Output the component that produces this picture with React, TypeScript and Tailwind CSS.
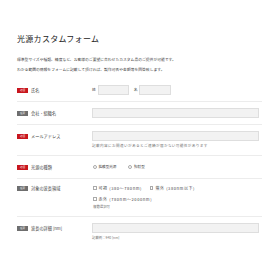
import React from "react";

const jp = "font-['Noto_Sans_CJK_JP','Noto_Sans',sans-serif]";

const Badge = ({ required }: { required?: boolean }) => (
	<span
		className={`flex h-[5px] w-[11px] items-center justify-center text-[2.6px] leading-none text-white ${
			required ? "bg-[#c8161d]" : "bg-[#6e6e6e]"
		}`}
	>
		{required ? "必須" : "任意"}
	</span>
);

const Label = ({ required, text, h = "h-[10px]" }: { required?: boolean; text: string; h?: string }) => (
	<div className={`flex w-[75px] shrink-0 items-center gap-[3px] ${h}`}>
		<Badge required={required} />
		<span className="text-[4.2px] leading-none text-[#444]">{text}</span>
	</div>
);

const Input = ({ className = "w-[167px]" }: { className?: string }) => (
	<div className={`h-[10px] border border-[#dedede] bg-[#f2f2f2] ${className}`} />
);

const Note = ({ text, className = "text-[3.4px]" }: { text: string; className?: string }) => (
	<p className={`mt-[2px] leading-[6px] text-[#777] ${className}`}>{text}</p>
);

const Radio = ({ text }: { text: string }) => (
	<label className="flex items-center gap-[2px]">
		<span className="h-[3.5px] w-[3.5px] rounded-full border-[0.5px] border-[#aaa] bg-white" />
		<span>{text}</span>
	</label>
);

const Check = ({ text }: { text: string }) => (
	<label className="flex items-center gap-[2px]">
		<span className="h-[3.5px] w-[3.5px] border-[0.5px] border-[#aaa] bg-white" />
		<span className="tracking-[0.6px]">{text}</span>
	</label>
);

const Row = ({ children, last }: { children: React.ReactNode; last?: boolean }) => (
	<div className={`flex py-[6px] ${last ? "" : "border-b border-[#ececec]"}`}>{children}</div>
);

export default function App() {
	return (
		<div className={`min-h-[280px] bg-white pl-[17px] pr-[18px] pt-[34px] ${jp}`}>
			<h1 className="text-[8px] leading-[10px] tracking-[0.3px] text-[#222]">光源カスタムフォーム</h1>
			<div className="mt-[11px] text-[3.8px] leading-[10px] text-[#444]">
				<p>標準型サイズや種類、精度など、お客様のご要望に合わせたカスタム品のご提供が可能です。</p>
				<p>わかる範囲の情報をフォームに記載して頂ければ、製作可否や金額等を回答致します。</p>
			</div>

			<div className="mt-[4px]">
				<Row>
					<Label required text="氏名" />
					<div className="flex items-center text-[3.8px] text-[#444]">
						<span className="mr-[2px]">姓</span>
						<Input className="w-[31px]" />
						<span className="ml-[5px] mr-[1px]">名</span>
						<Input className="w-[32px]" />
					</div>
				</Row>
				<Row>
					<Label text="会社・組織名" />
					<Input />
				</Row>
				<Row>
					<Label required text="メールアドレス" />
					<div>
						<Input />
						<Note
							className="text-[3.6px] tracking-[0.4px]"
							text="記載内容にお間違いがあるとご連絡が届かない可能性があります"
						/>
					</div>
				</Row>
				<Row>
					<Label required text="光源の種類" />
					<div className="flex h-[10px] items-center gap-[12px] pl-[1px] text-[3.6px] text-[#444]">
						<Radio text="拡散型光源" />
						<Radio text="照射型" />
					</div>
				</Row>
				<Row>
					<Label text="対象の波長領域" h="h-[6px]" />
					<div className="pl-[1px] text-[4px] leading-[6px] text-[#444]">
						<div className="flex gap-[8px]">
							<Check text="可視 (380〜780nm)" />
							<Check text="紫外 (380nm以下)" />
						</div>
						<div className="mt-[5px]">
							<Check text="赤外 (780nm〜2000nm)" />
						</div>
						<Note text="複数選択可" />
					</div>
				</Row>
				<Row last>
					<Label text="波長の詳細 [nm]" />
					<div>
						<Input />
						<Note text="記載例：940 [nm]" />
					</div>
				</Row>
			</div>
		</div>
	);
}
